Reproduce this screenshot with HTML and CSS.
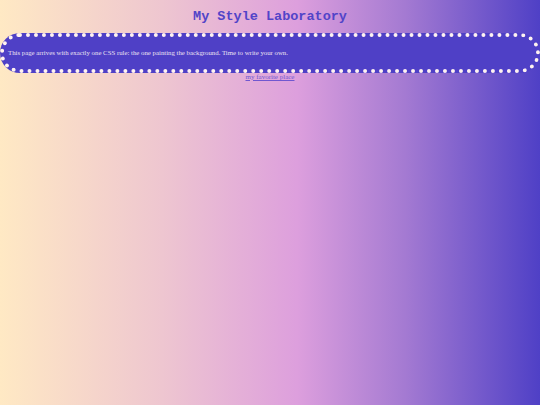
FILE: index.html
```html
<!DOCTYPE html>
<html>
<head>
<meta charset="utf-8">
<link rel="stylesheet" href="styles.css">
</head>
<body>
<h1 class="title">My Style Laboratory</h1>
<div class="panel">
<p class="intro">This page arrives with exactly one CSS rule: the one painting the background. Time to write your own.</p>
</div>
<div class="links"><a class="fav" href="#">my favorite place</a></div>
</body>
</html>
```
FILE: styles.css
```css
html, body {
  margin: 0;
  padding: 0;
  height: 100%;
}
body {
  background: linear-gradient(to right, #ffe9c4 0%, #eec6d0 30%, #dd9fdd 55%, #a47ad2 75%, #4f40c6 100%);
  font-family: "Liberation Serif", serif;
}
.title {
  margin: 0;
  padding-top: 9px;
  height: 24px;
  text-align: center;
  font-family: "Liberation Mono", monospace;
  font-weight: bold;
  font-size: 13.5px;
  line-height: 16px;
  color: #5244c8;
}
.panel {
  background: #4f40c6;
  border: 4px dotted #fff2f0;
  border-radius: 22px;
  height: 30px;
  display: flex;
  align-items: center;
  padding: 0 5px 2px 4px;
}
.intro {
  margin: 0;
  font-size: 6.8px;
  color: #ece2f2;
}
.links {
  text-align: center;
  font-size: 7px;
  line-height: 8px;
}
.fav {
  color: #7057d0;
}
```
